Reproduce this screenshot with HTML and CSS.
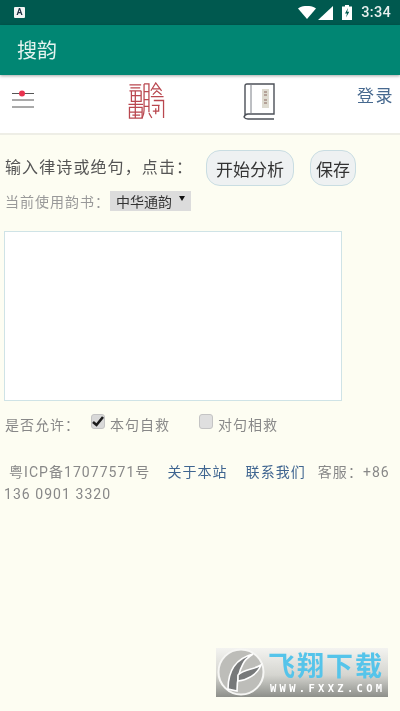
FILE: index.html
```html
<!DOCTYPE html>
<html lang="zh-CN">
<head>
    <meta charset="UTF-8" />
    <meta name="viewport" content="width=device-width, initial-scale=1.0"/>
    <title>搜韵</title>
    <link rel="stylesheet" href="styles.css">
</head>
<body>
<div class="page">
    <div class="status-bar">
        <span class="status-a">A</span>
        <div class="status-right">
            <svg class="icon-wifi" width="18" height="13" viewBox="0 0 18 13"><path d="M0 2.5C5-1 13-1 18 2.500L9 13z" fill="#fff"/></svg>
            <svg class="icon-signal" width="15" height="14" viewBox="0 0 15 14"><path d="M15 0V14H0z" fill="#fff"/></svg>
            <svg class="icon-battery" width="10" height="15" viewBox="0 0 10 15"><path d="M3 0H7V1.500H10V15H0V1.500H3z" fill="#fff"/><path d="M6 3L3 8.500H5L4 12.500L7.300 6.800H5.200z" fill="#00594f"/></svg>
            <span class="status-time">3:34</span>
        </div>
    </div>
    <header class="app-bar">搜韵</header>

    <nav class="top-nav">
        <svg class="menu-icon" width="24" height="20" viewBox="0 0 24 20">
            <path d="M1 4.500H23M1 11H23M1 18H23" stroke="#555" stroke-width="1" fill="none"/>
            <circle cx="11" cy="4.500" r="3" fill="#e8334f"/>
        </svg>
        <svg class="seal-logo" width="37" height="37" viewBox="0 0 37 38" fill="none" stroke="#b9474f" stroke-width="1.300">
            <path d="M1 3H13M2 6H12M1 9H13M3 9V20H13V9M7 9V20M3 14H13M0 23H15M7 20V37M1 26H14V37H1zM1 31H14M4 34H12"/>
            <path d="M16 2V29Q16 33 14 37M16 2H21V31M16 10H21M16 18H21M16 25H21M21 32L24 37"/>
            <path d="M23 9L28 1L34 9M25 7H32M25 13L29 9L34 13M23 15H36M26 19H36V37M24 24H32M31 24V30H25M28 27V33"/>
        </svg>
        <svg class="book-icon" width="34" height="38" viewBox="0 0 34 38" fill="none">
            <path d="M3 33V3Q3 1 5 1H32V31H6Q3 31 2 34Q3 36 6 36H32" stroke="#4c5058" stroke-width="1.400"/>
            <path d="M9 1V31" stroke="#7b7f86" stroke-width="1"/>
            <rect x="20" y="6" width="7" height="19" fill="#dedbd0"/>
            <path d="M22 9H25M22 12H25M22 17H25M22 20H25" stroke="#8a6a60" stroke-width="1.200"/>
        </svg>
        <a class="login-link">登录</a>
    </nav>

    <main class="content">
        <div class="action-row">
            <span class="action-label">输入律诗或绝句，点击：</span>
            <button class="pill-btn start-btn">开始分析</button>
            <button class="pill-btn save-btn">保存</button>
        </div>
        <div class="book-row">
            <span>当前使用韵书：</span>
            <span class="book-select">中华通韵<i class="select-arrow"></i></span>
        </div>
        <textarea class="poem-input"></textarea>
        <div class="allow-row">
            <span class="allow-label">是否允许：</span>
            <span class="check-box checked">
                <svg width="12" height="11" viewBox="0 0 12 11"><path d="M1 6L4.500 9L11 1" fill="none" stroke="#1c1c1c" stroke-width="2.600"/></svg>
            </span>
            <span class="check-text">本句自救</span>
            <span class="check-box second"></span>
            <span class="check-text">对句相救</span>
        </div>
        <p class="site-footer">
            <span class="icp">粤ICP备17077571号</span><a class="about-link">关于本站</a><a class="contact-link">联系我们</a><span>客服：+86</span><br>
            <span>136 0901 3320</span>
        </p>
    </main>

    <div class="watermark">
        <svg class="wm-logo" width="48" height="50" viewBox="0 0 48 50" fill="none">
            <circle cx="24" cy="25" r="22.500" fill="#bdbdb9" stroke="#f6f6f4" stroke-width="2"/>
            <path d="M11 42C11 26 17 12 36 7C30 11 27 14 26 17C22 24 20 33 20 44z" fill="#77797a" stroke="#fff" stroke-width="1.600"/>
            <path d="M21 28C27 22 36 23 44 18C40 28 30 33 21 34z" fill="#77797a" stroke="#fff" stroke-width="1.600"/>
        </svg>
        <div class="wm-text">
            <div class="wm-title">飞翔下载</div>
            <div class="wm-url">WWW.FXXZ.COM</div>
        </div>
    </div>
</div>
</body>
</html>
```

FILE: styles.css
```css
body {
    margin: 0;
    background: #fdfdf2;
}
.page {
    height: 711px;
    overflow: hidden;
    position: relative;
    background: #fdfdf2;
    color: #666;
    font-family: "Roboto", "Noto Sans CJK SC", sans-serif;
    filter: blur(0.4px);
}
.status-bar {
    height: 25px;
    background: #00594f;
    display: flex;
    align-items: center;
    justify-content: space-between;
    padding: 0 9px 0 14px;
}
.status-a {
    width: 11px;
    height: 11px;
    background: #f2f5f4;
    border-radius: 1px;
    color: #234;
    font-size: 9px;
    font-weight: 700;
    line-height: 11px;
    text-align: center;
}
.status-right {
    display: flex;
    align-items: center;
    color: #e6efed;
    font-size: 14.500px;
    font-weight: 500;
}
.icon-wifi {
    margin-right: 2px;
}
.icon-signal {
    margin-right: 9px;
}
.icon-battery {
    margin-right: 9px;
}
.status-time {
    letter-spacing: 0.300px;
}
.app-bar {
    height: 50px;
    background: #018673;
    color: #e4f3ef;
    font-size: 20px;
    line-height: 53px;
    padding-left: 17px;
    box-shadow: 0 1px 3px rgba(0, 0, 0, 0.35);
    position: relative;
}
.top-nav {
    height: 60px;
    box-sizing: border-box;
    background: #fff;
    border-bottom: 2px solid #eeeee6;
    display: flex;
    align-items: flex-start;
}
.menu-icon {
    margin: 14px 0 0 11px;
}
.seal-logo {
    margin: 7px 0 0 93px;
}
.book-icon {
    margin: 8px 0 0 77px;
}
.login-link {
    margin: 9px 0 0 auto;
    padding-right: 6px;
    color: #47698f;
    font-size: 17px;
    letter-spacing: 1.500px;
    line-height: 24px;
}
.content {
    padding: 15px 4px 0 5px;
}
.action-row {
    display: flex;
    align-items: flex-start;
    height: 38px;
}
.action-label {
    color: #555;
    font-size: 16px;
    letter-spacing: 1.100px;
    line-height: 36px;
    white-space: nowrap;
    margin-right: 13px;
}
.pill-btn {
    height: 36px;
    padding: 0;
    background: #eef1f2;
    border: 1px solid #c9dde2;
    border-radius: 14px;
    color: #333;
    font-family: inherit;
    font-size: 17px;
}
.start-btn {
    width: 88px;
    margin-right: 16px;
}
.save-btn {
    width: 46px;
}
.book-row {
    display: flex;
    align-items: center;
    color: #999;
    font-size: 14px;
    letter-spacing: 1px;
    margin-top: 3px;
    height: 20px;
}
.book-select {
    width: 81px;
    height: 20px;
    box-sizing: border-box;
    padding-left: 6px;
    background: #dcdcdc;
    color: #333;
    font-size: 14px;
    letter-spacing: 0;
    line-height: 22px;
    position: relative;
}
.select-arrow {
    position: absolute;
    top: 5px;
    right: 6px;
    border: 3.500px solid transparent;
    border-top: 5px solid #111;
    border-bottom: 0;
}
.poem-input {
    display: block;
    box-sizing: border-box;
    width: 338px;
    height: 170px;
    margin: 20px 0 0 -1px;
    padding: 4px;
    background: #fff;
    border: 1px solid #cfe3e6;
    border-radius: 0;
    outline: none;
    resize: none;
}
.allow-row {
    display: flex;
    align-items: center;
    height: 24px;
    margin-top: 11px;
    color: #888;
    font-size: 14px;
    letter-spacing: 1px;
}
.allow-label {
    width: 86px;
}
.check-box {
    width: 14px;
    height: 15px;
    box-sizing: border-box;
    margin: -6px 5px 0 0;
    background: #d9d9d9;
    border: 1px solid #c4c4c4;
    border-radius: 3px;
    display: flex;
    align-items: center;
    justify-content: center;
}
.check-box.second {
    margin-left: 29px;
    background: #dfdfdf;
}
.site-footer {
    margin: 25px 0 0 -1px;
    color: #888;
    font-size: 14px;
    line-height: 22px;
    letter-spacing: 1.050px;
    white-space: nowrap;
}
.icp {
    margin: 0 17px 0 5px;
}
.site-footer a {
    color: #3f6590;
}
.about-link {
    margin-right: 18px;
}
.contact-link {
    margin-right: 12px;
}
.watermark {
    position: absolute;
    left: 216px;
    top: 648px;
    width: 172px;
    height: 49px;
    display: flex;
    background: linear-gradient(#f3f3f0, #d5d5d0 55%, #8d8f8a);
}
.wm-logo {
    margin: -1px 0 0 1px;
    flex: none;
}
.wm-text {
    margin-left: 3px;
}
.wm-title {
    color: #55c4ea;
    font-size: 27px;
    font-weight: 700;
    padding-top: 5px;
    line-height: 29px;
    letter-spacing: 2px;
    white-space: nowrap;
}
.wm-url {
    color: #fff;
    font-family: "DejaVu Sans Mono", monospace;
    font-size: 10.500px;
    font-weight: 700;
    letter-spacing: 3.300px;
    margin-left: 2px;
    line-height: 13px;
    white-space: nowrap;
}
```
